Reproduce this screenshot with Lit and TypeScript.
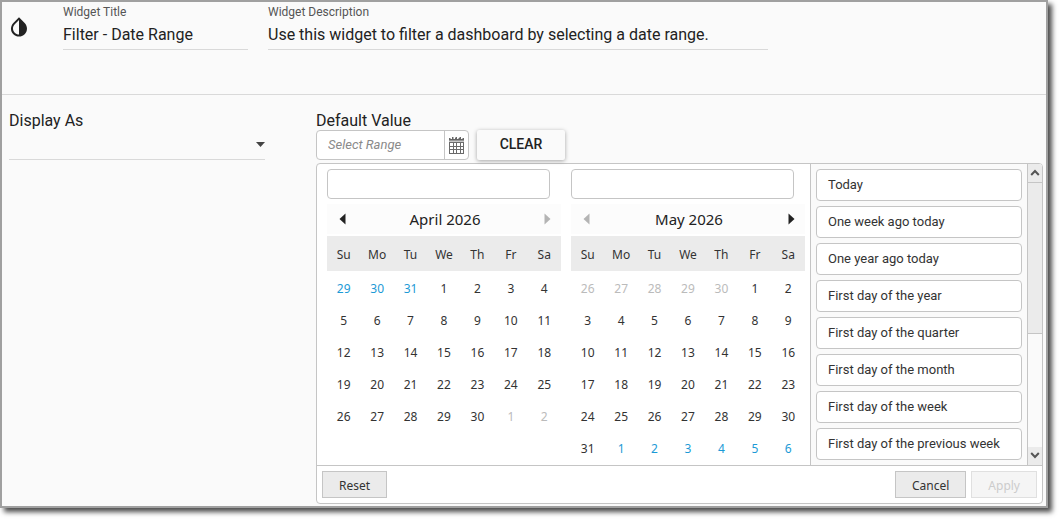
import { LitElement, html, css, svg } from "lit";
import { customElement, property } from "lit/decorators.js";
import { classMap } from "lit/directives/class-map.js";

type Tone = "normal" | "link" | "muted";
interface Day {
  n: number;
  tone: Tone;
}

const WEEKDAYS = ["Su", "Mo", "Tu", "We", "Th", "Fr", "Sa"];

const PRESETS = [
  "Today",
  "One week ago today",
  "One year ago today",
  "First day of the year",
  "First day of the quarter",
  "First day of the month",
  "First day of the week",
  "First day of the previous week",
];

const run = (from: number, to: number, tone: Tone = "normal"): Day[] =>
  Array.from({ length: to - from + 1 }, (_, i) => ({ n: from + i, tone }));

const APRIL: Day[] = [...run(29, 31, "link"), ...run(1, 30), ...run(1, 2, "muted")];
const MAY: Day[] = [...run(26, 30, "muted"), ...run(1, 31), ...run(1, 6, "link")];

const weeks = (days: Day[]): Day[][] => {
  const rows: Day[][] = [];
  for (let i = 0; i < days.length; i += 7) rows.push(days.slice(i, i + 7));
  return rows;
};

@customElement("month-calendar")
export class MonthCalendar extends LitElement {
  @property() heading = "";
  @property() fieldLabel = "";
  @property({ attribute: false }) days: Day[] = [];
  @property({ type: Boolean }) prevDisabled = false;
  @property({ type: Boolean }) nextDisabled = false;

  static styles = css`
    :host {
      display: block;
      width: 234px;
      font-family: "Noto Sans", "Open Sans", sans-serif;
      color: #333;
    }
    * {
      box-sizing: border-box;
    }
    .field {
      display: block;
      width: 223px;
      height: 30px;
      margin: 0 0 5px;
      padding: 0 8px;
      border: 1px solid #c5c5c5;
      border-radius: 4px;
      background: #fff;
      font: inherit;
      font-size: 13px;
    }
    .title {
      display: flex;
      align-items: center;
      justify-content: space-between;
      height: 30px;
      margin-bottom: 2px;
      padding-left: 2px;
      background: #fcfcfc;
    }
    .name {
      margin: 0;
      font-size: 15px;
      line-height: 20px;
      font-weight: 400;
      color: #222;
    }
    .nav {
      display: flex;
      align-items: center;
      justify-content: center;
      width: 27px;
      height: 30px;
      padding: 0;
      border: 0;
      background: none;
      color: #222;
    }
    .nav:disabled {
      color: #b4b4b4;
    }
    .nav svg {
      display: block;
      fill: currentColor;
    }
    .grid {
      width: 100%;
      table-layout: fixed;
      border-collapse: collapse;
      font-size: 12px;
      line-height: 16px;
      text-align: center;
    }
    .grid th {
      height: 35px;
      padding: 2px 0 0;
      background: #ebebeb;
      font-weight: 400;
    }
    .grid td {
      height: 32px;
      padding: 0;
    }
    .day {
      width: 100%;
      height: 32px;
      padding: 4px 0 0;
      border: 0;
      background: none;
      font: inherit;
      color: inherit;
    }
    .link {
      color: #1c9ad6;
    }
    .muted {
      color: #bbb;
    }
  `;

  render() {
    return html`
      <input class="field" type="text" aria-label=${this.fieldLabel} />
      <div class="title">
        <button class="nav" aria-label="Previous month" ?disabled=${this.prevDisabled}>
          <svg width="7" height="12" viewBox="0 0 7 12"><path d="M6.5 0.5V11.5L0.5 6Z" /></svg>
        </button>
        <h3 class="name">${this.heading}</h3>
        <button class="nav" aria-label="Next month" ?disabled=${this.nextDisabled}>
          <svg width="7" height="12" viewBox="0 0 7 12"><path d="M0.5 0.5V11.5L6.5 6Z" /></svg>
        </button>
      </div>
      <table class="grid" aria-label=${this.heading}>
        <thead>
          <tr>
            ${WEEKDAYS.map((d) => html`<th scope="col">${d}</th>`)}
          </tr>
        </thead>
        <tbody>
          ${weeks(this.days).map(
            (row) => html`<tr>
              ${row.map(
                (d) => html`<td>
                  <button
                    class=${classMap({
                      day: true,
                      link: d.tone === "link",
                      muted: d.tone === "muted",
                    })}
                  >
                    ${d.n}
                  </button>
                </td>`
              )}
            </tr>`
          )}
        </tbody>
      </table>
    `;
  }
}

const dropIcon = svg`
  <path fill="#222" d="M17.66 7.93L12 2.27 6.34 7.93c-3.12 3.12-3.12 8.19 0 11.31C7.9 20.8 9.95 21.58 12 21.58c2.05 0 4.1-.78 5.66-2.34 3.12-3.12 3.12-8.19 0-11.31zM12 19.59c-1.6 0-3.11-.62-4.24-1.76C6.62 16.69 6 15.19 6 13.59s.62-3.11 1.76-4.24L12 5.1v14.49z" />`;

const calendarIcon = svg`
  <path d="M0 2H15V6H0Z" fill="#c9c9c9" />
  <path d="M0 1H1.5V2H3V0H4.5V2H6V1H6.5V0H8V2H9.5V1H10.5V0H12V2H13.5V1H15V3.4H0Z" fill="#666" />
  <rect x="0.5" y="5.5" width="14" height="11" fill="#fff" />
  <path d="M0 5.5H15M0 9.5H15M0 12.5H15M0 16.5H15M0.5 5V17M4.5 5V17M7.5 5V17M11.5 5V17M14.5 5V17"
    fill="none" stroke="#6a6a6a" stroke-width="1" />`;

@customElement("app-root")
export class AppRoot extends LitElement {
  static styles = css`
    :host {
      display: block;
      padding: 0 15px 15px 0;
      background: #fff;
      font-family: Roboto, "Liberation Sans", sans-serif;
      font-size: 16px;
      color: #222;
    }
    * {
      box-sizing: border-box;
    }
    .frame {
      border: 2px solid #a0a0a0;
      background: #fafafa;
      box-shadow: 4px 4px 5px rgba(0, 0, 0, 0.7);
    }
    .head {
      display: flex;
      padding: 2px 8px 44px;
      border-bottom: 1px solid #d9d9d9;
    }
    .mark {
      width: 53px;
      padding-top: 12px;
    }
    .mark svg {
      display: block;
    }
    .pair {
      display: flex;
      flex-direction: column;
      width: 185px;
      margin-right: 20px;
    }
    .wide {
      width: 500px;
    }
    .caption {
      font-size: 12px;
      line-height: 16px;
      color: #555;
    }
    .line-input {
      width: 100%;
      height: 30px;
      padding: 0;
      border: 0;
      border-bottom: 1px solid #d9d9d9;
      background: none;
      font: inherit;
      color: inherit;
    }
    .main {
      display: flex;
      gap: 51px;
      padding: 15px 3px 2px 7px;
    }
    .side {
      width: 256px;
    }
    .label {
      display: block;
      padding-top: 2px;
      line-height: 18px;
    }
    .select-wrap {
      display: grid;
      align-items: center;
      border-bottom: 1px solid #d9d9d9;
    }
    .select-wrap > * {
      grid-area: 1 / 1;
    }
    .select {
      width: 100%;
      height: 29px;
      padding: 0;
      border: 0;
      background: none;
      appearance: none;
      font: inherit;
    }
    .caret {
      justify-self: end;
      pointer-events: none;
    }
    .value {
      flex: 1;
      min-width: 0;
    }
    .controls {
      display: flex;
      gap: 8px;
      margin-bottom: 3px;
    }
    .range {
      display: flex;
      width: 153px;
      height: 30px;
      border: 1px solid #c5c5c5;
      border-radius: 4px;
      background: #fff;
      overflow: hidden;
    }
    .range-input {
      flex: 1;
      min-width: 0;
      padding: 0 11px 2px;
      border: 0;
      background: none;
      font: inherit;
      font-size: 13px;
    }
    .range-input::placeholder {
      font-style: italic;
      color: #8a8a8a;
    }
    .range-btn {
      display: flex;
      align-items: center;
      justify-content: center;
      width: 24px;
      padding: 0;
      border: 0;
      border-left: 1px solid #c5c5c5;
      background: none;
    }
    .clear {
      width: 88px;
      height: 30px;
      padding: 0 0 2px;
      border: 0;
      border-radius: 2px;
      background: #fafafa;
      box-shadow: 0 1px 4px rgba(0, 0, 0, 0.35);
      font: inherit;
      font-size: 14px;
      font-weight: 500;
      text-transform: uppercase;
      color: #222;
    }
    .popup {
      border: 1px solid #c5c5c5;
      border-radius: 4px;
      background: #fff;
      overflow: hidden;
    }
    .body {
      display: flex;
      border-bottom: 1px solid #c5c5c5;
    }
    .months {
      display: flex;
      gap: 10px;
      padding: 5px 5px 2px 10px;
      border-right: 1px solid #c5c5c5;
    }
    .presets {
      display: flex;
      flex: 1;
      flex-direction: column;
      gap: 5px;
      margin: 0;
      padding: 5px;
      background: #fafafa;
      list-style: none;
    }
    .preset {
      display: block;
      width: 100%;
      height: 32px;
      padding: 0 11px 2px;
      border: 1px solid #c5c5c5;
      border-radius: 4px;
      background: #fff;
      font: inherit;
      font-size: 13px;
      text-align: left;
      color: #333;
    }
    .scroll {
      display: flex;
      flex-direction: column;
      width: 15px;
      border-left: 1px solid #c5c5c5;
      background: #fafafa;
    }
    .step {
      display: flex;
      align-items: center;
      justify-content: center;
      height: 18px;
      padding: 0 0 2px;
      border: 0;
      background: #ebebeb;
    }
    .thumb {
      height: 152px;
      border: solid #c5c5c5;
      border-width: 1px 0;
      background: #ebebeb;
    }
    .track {
      flex: 1;
    }
    .foot {
      display: flex;
      gap: 5px;
      padding: 5px;
    }
    .btn {
      height: 27px;
      padding: 1px 16px 0;
      border: 1px solid #c5c5c5;
      background: #ebebeb;
      font-family: "Noto Sans", "Open Sans", sans-serif;
      font-size: 12px;
      color: #333;
    }
    .reset {
      margin-right: auto;
    }
    .btn:disabled {
      border-color: #e0e0e0;
      background: #f5f5f5;
      color: #ccc;
    }
  `;

  render() {
    return html`
      <div class="frame">
        <header class="head">
          <div class="mark">
            <svg width="18" height="21" viewBox="3 1 18 21">${dropIcon}</svg>
          </div>
          <div class="pair">
            <label class="caption" for="title">Widget Title</label>
            <input class="line-input" id="title" .value=${"Filter - Date Range"} />
          </div>
          <div class="pair wide">
            <label class="caption" for="desc">Widget Description</label>
            <input
              class="line-input"
              id="desc"
              .value=${"Use this widget to filter a dashboard by selecting a date range."}
            />
          </div>
        </header>
        <main class="main">
          <section class="side">
            <label class="label" for="display">Display As</label>
            <div class="select-wrap">
              <select class="select" id="display">
                <option></option>
              </select>
              <svg class="caret" width="9" height="5" viewBox="0 0 9 5">
                <path d="M0 0H9L4.5 5Z" fill="#444" />
              </svg>
            </div>
          </section>
          <section class="value">
            <label class="label" for="range">Default Value</label>
            <div class="controls">
              <div class="range">
                <input class="range-input" id="range" placeholder="Select Range" />
                <button class="range-btn" aria-label="Open calendar">
                  <svg width="15" height="17" viewBox="0 0 15 17">${calendarIcon}</svg>
                </button>
              </div>
              <button class="clear">Clear</button>
            </div>
            <div class="popup">
              <div class="body">
                <div class="months">
                  <month-calendar
                    heading="April 2026"
                    fieldLabel="Start date"
                    .days=${APRIL}
                    .nextDisabled=${true}
                  ></month-calendar>
                  <month-calendar
                    heading="May 2026"
                    fieldLabel="End date"
                    .days=${MAY}
                    .prevDisabled=${true}
                  ></month-calendar>
                </div>
                <ul class="presets">
                  ${PRESETS.map((p) => html`<li><button class="preset">${p}</button></li>`)}
                </ul>
                <div class="scroll">
                  <button class="step" aria-label="Scroll up">
                    <svg width="10" height="7" viewBox="0 0 10 7">
                      <path d="M1.2 6L5 2L8.8 6" fill="none" stroke="#555" stroke-width="2" />
                    </svg>
                  </button>
                  <div class="thumb"></div>
                  <div class="track"></div>
                  <button class="step" aria-label="Scroll down">
                    <svg width="10" height="7" viewBox="0 0 10 7">
                      <path d="M1.2 1L5 5L8.8 1" fill="none" stroke="#555" stroke-width="2" />
                    </svg>
                  </button>
                </div>
              </div>
              <div class="foot">
                <button class="btn reset">Reset</button>
                <button class="btn">Cancel</button>
                <button class="btn" disabled>Apply</button>
              </div>
            </div>
          </section>
        </main>
      </div>
    `;
  }
}
